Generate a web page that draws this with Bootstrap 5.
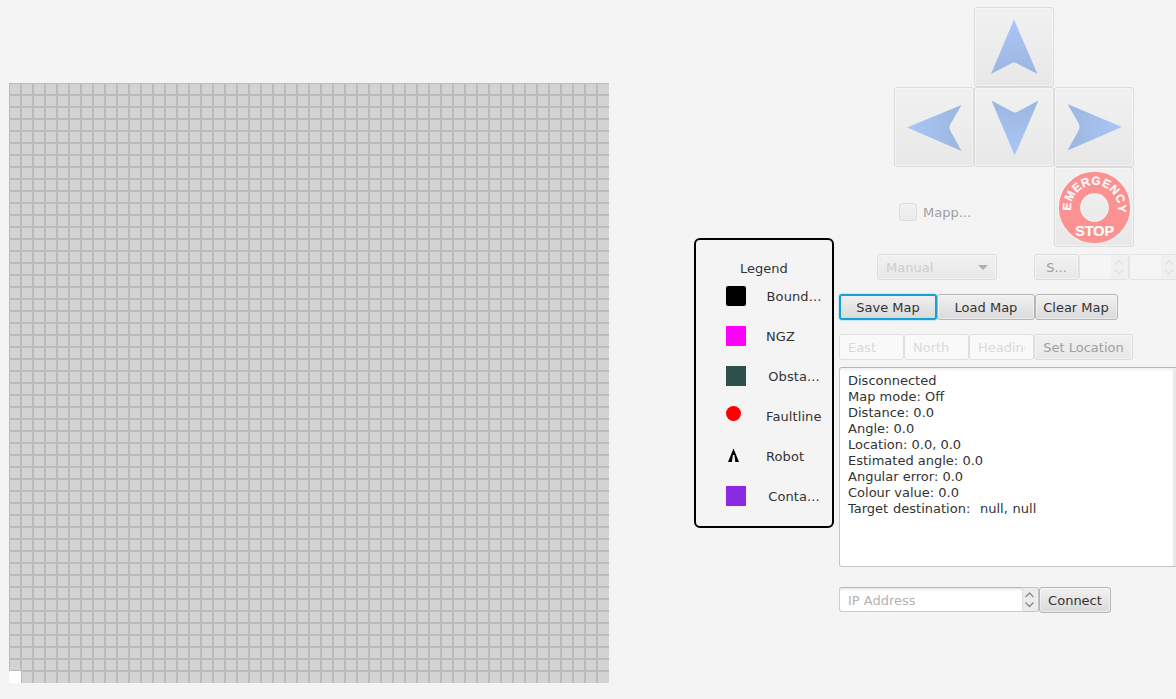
<!DOCTYPE html>
<html lang="en">
<head>
<meta charset="utf-8">
<meta name="viewport" content="width=device-width, initial-scale=1">
<title>Robot Control</title>
<link href="https://cdn.jsdelivr.net/npm/bootstrap@5.3.0/dist/css/bootstrap.min.css" rel="stylesheet">
<style>
body{background:#f4f4f4;font:13px/16px "DejaVu Sans",sans-serif;color:#333;width:1176px;height:699px;overflow:hidden}
.map-grid{width:600px;height:600px;margin:83px 0 0 9px;background:
 repeating-linear-gradient(90deg,#bbb 0 1px,transparent 1px 11px,#bbb 11px 12px),
 repeating-linear-gradient(180deg,#bbb 0 1px,transparent 1px 11px,#bbb 11px 12px) #d3d3d3;
 background-size:599px 600px,600px 599px;background-repeat:no-repeat}
.origin-cell{width:12px;height:12px;background:#fff}
.legend-box{width:140px;height:290px;margin:238px 5px 0 85px;border:2px solid #000;border-radius:6px;padding-top:20px}
.legend-title{padding-top:1px;margin-bottom:-1px}
.legend-item{height:40px;padding-left:30px}
.legend-item svg,.swatch{width:20px;height:20px;flex:none}
.legend-name{width:56px;margin-left:20px;padding-top:2px;white-space:nowrap;letter-spacing:.1px}
.panel{width:350px}
.pad{display:grid;grid-template-columns:repeat(3,80px);grid-template-rows:repeat(3,80px);margin:7px 0 0 55px}
.fx{font:inherit;color:#333;border:1px solid #b5b5b5;border-radius:3px;background:linear-gradient(#f1f1f1,#dadada);box-shadow:inset 0 0 0 1px rgba(255,255,255,.45);padding:2px 0 0;height:26px;line-height:22px;flex:none;white-space:nowrap}
.fx:disabled{font:inherit;line-height:22px;color:#a0a0a0;border-color:#dcdcdc;background:linear-gradient(#f1f1f1,#e8e8e8);opacity:1}
.pad .fx{width:80px;height:80px;padding:0}
.pad svg{display:block;width:78px;height:78px}
.fx.focused{border:2px solid #16a0d3;box-shadow:0 0 1px 1px #c5e5f2;line-height:20px;color:#333;background:linear-gradient(#efefef,#dadada)}
.field{font:inherit;height:26px;border:1px solid #ccc;border-top-color:#b8b8b8;border-radius:3px;background:#fff;padding:0 8px;color:#333;flex:none;box-shadow:inset 0 3px 3px -2px #ddd}
.field::placeholder{color:#b3b3b3;opacity:1}
.field:disabled{background:#f9f9f9;border-color:#e0e0e0;box-shadow:none}
.field:disabled::placeholder{color:#dadada}
.tick{width:18px;height:18px;border:1px solid #dcdcdc;border-radius:3px;background:linear-gradient(#f1f1f1,#ebebeb)}
.mapping{height:18px;margin:-44px 0 0 60px;color:#a0a0a0}
.spin{width:50px;height:26px;border:1px solid #e4e4e4;border-radius:3px;background:#f5f5f5;flex:none}
.spin svg{width:17px;height:24px;background:#f0f0f0;display:block}
.log{width:350px;height:200px;margin-top:7px;border:1px solid #c6c6c6;border-top-color:#b5b5b5;border-radius:3px;padding:5px 8px;background:linear-gradient(#f0f0f0,transparent 4px),linear-gradient(90deg,#fff 333px,#e8e8e8 333px);white-space:pre}
.target-line{word-spacing:.7px}
.ip{width:183px;height:25px;padding-top:2px;border-radius:3px 0 0 3px;border-right:0}
.ip-spin{width:17px;height:25px;border:1px solid #c4c4c4;border-left-color:#ddd;border-radius:0 3px 3px 0;background:#ececec;flex:none}
</style>
</head>
<body>
<main class="d-flex align-items-start">
  <section class="map-grid d-flex align-items-end flex-shrink-0"><div class="origin-cell"></div></section>

  <aside class="legend-box flex-shrink-0">
    <div class="legend-title text-center">Legend</div>
    <div class="legend-item d-flex align-items-center"><span class="swatch" style="background:#000;border-radius:2px"></span><span class="legend-name text-center">Bound...</span></div>
    <div class="legend-item d-flex align-items-center"><span class="swatch" style="background:#f0f"></span><span class="legend-name">NGZ</span></div>
    <div class="legend-item d-flex align-items-center"><span class="swatch" style="background:#2f4f4f"></span><span class="legend-name text-center">Obsta...</span></div>
    <div class="legend-item d-flex align-items-center"><svg viewBox="0 0 20 20"><circle cx="7.5" cy="7.5" r="7.5" fill="red"/></svg><span class="legend-name">Faultline</span></div>
    <div class="legend-item d-flex align-items-center"><svg viewBox="0 0 20 20"><path d="M7.5 2.5 13 16H9.3L8.4 9H6.9L5.9 16H2Z"/></svg><span class="legend-name">Robot</span></div>
    <div class="legend-item d-flex align-items-center"><span class="swatch" style="background:#8a2be2"></span><span class="legend-name text-center">Conta...</span></div>
  </aside>

  <section class="panel flex-shrink-0">
    <svg width="0" height="0" class="d-block"><defs>
      <linearGradient id="up" x2="0" y2="1"><stop stop-color="#abc6f7"/><stop offset="1" stop-color="#9bb7df"/></linearGradient>
      <linearGradient id="down" x2="0" y2="1"><stop stop-color="#9bb7df"/><stop offset="1" stop-color="#abc6f7"/></linearGradient>
      <linearGradient id="left"><stop stop-color="#abc6f7"/><stop offset="1" stop-color="#9bb7df"/></linearGradient>
      <linearGradient id="right"><stop stop-color="#9bb7df"/><stop offset="1" stop-color="#abc6f7"/></linearGradient>
    </defs></svg>
    <div class="pad">
      <span></span>
      <button class="fx" disabled aria-label="Forward"><svg viewBox="1 1 78 78"><path fill="url(#up)" d="M40 12.5 63.5 67 42 56Q40 55 38 56L17 67Z"/></svg></button>
      <span></span>
      <button class="fx" disabled aria-label="Left"><svg viewBox="1 1 78 78"><path fill="url(#left)" d="M13 40.5 67.5 18 56.5 37Q54.5 40.5 56.5 44L67.5 64Z"/></svg></button>
      <button class="fx" disabled aria-label="Backward"><svg viewBox="1 1 78 78"><path fill="url(#down)" d="M40.7 68.5 17.5 13.5 38 24.5Q41 26.5 44 24.5L64.5 13.5Z"/></svg></button>
      <button class="fx" disabled aria-label="Right"><svg viewBox="1 1 78 78"><path fill="url(#right)" d="M68 40 13.5 17 24.5 36Q26.5 40 24.5 43.5L13.5 63.5Z"/></svg></button>
      <span></span><span></span>
      <button class="fx" disabled aria-label="Emergency stop"><svg viewBox="1 1 78 78">
        <circle cx="40.5" cy="40.5" r="25" fill="none" stroke="#fafafa" stroke-width="23"/>
        <circle cx="40.5" cy="40.5" r="25" fill="none" stroke="#fb9292" stroke-width="21.4"/>
        <path id="arc" d="M17.1 43.5A23.5 23.5 0 1 1 63.9 43.5" fill="none"/>
        <g fill="#fafafa" font-family="Liberation Sans,sans-serif" font-weight="700"><text font-size="11.8" stroke="#fafafa" stroke-width=".2"><textPath href="#arc" textLength="79.5">EMERGENCY</textPath></text>
        <text x="21.2" y="69" font-size="15.2" stroke="#fafafa" stroke-width=".2" textLength="39" lengthAdjust="spacingAndGlyphs">STOP</text></g>
      </svg></button>
    </div>

    <div class="mapping d-flex align-items-center"><span class="tick"></span><span style="margin-left:6px;padding-top:2px">Mapp...</span></div>

    <div class="d-flex" style="margin:33px 0 0 38px">
      <button class="fx d-flex align-items-center justify-content-between" disabled style="width:120px;padding:2px 8px 0;color:#cdcdcd;margin-right:37px">Manual<svg width="10" height="5" style="margin-top:-2px"><path d="M0 0H10L5 5Z" fill="#b0b0b0"/></svg></button>
      <button class="fx" disabled style="width:45px">S...</button>
      <div class="spin d-flex justify-content-end"><svg viewBox="0 0 17 24"><path d="M4 9.5 8 5.5 12 9.5M4 14.5 8 18.5 12 14.5" fill="none" stroke="#e2e2e2" stroke-width="1.3"/></svg></div>
      <div class="spin d-flex justify-content-end"><svg viewBox="0 0 17 24"><path d="M4 9.5 8 5.5 12 9.5M4 14.5 8 18.5 12 14.5" fill="none" stroke="#e2e2e2" stroke-width="1.3"/></svg></div>
    </div>

    <div class="d-flex" style="margin-top:14px">
      <button class="fx focused" style="width:98px">Save Map</button>
      <button class="fx" style="width:98px">Load Map</button>
      <button class="fx" style="width:83px;padding-right:1px">Clear Map</button>
    </div>

    <div class="d-flex" style="margin-top:14px">
      <input class="field" style="width:65px" placeholder="East" disabled>
      <input class="field" style="width:65px" placeholder="North" disabled>
      <input class="field" style="width:65px" placeholder="Heading" disabled>
      <button class="fx" disabled style="width:99px">Set Location</button>
    </div>

    <div class="log">Disconnected
Map mode: Off
Distance: 0.0
Angle: 0.0
Location: 0.0, 0.0
Estimated angle: 0.0
Angular error: 0.0
Colour value: 0.0
<span class="target-line">Target destination:  null, null</span></div>

    <div class="d-flex" style="margin-top:20px">
      <input class="field ip" placeholder="IP Address">
      <div class="ip-spin"><svg class="d-block" width="15" height="23"><path d="M2.5 9 6.5 5 10.5 9M2.5 14.5 6.5 18.5 10.5 14.5" fill="none" stroke="#8a8a8a" stroke-width="1.3"/></svg></div>
      <button class="fx" style="width:72px">Connect</button>
    </div>
  </section>
</main>
<script src="https://cdn.jsdelivr.net/npm/bootstrap@5.3.0/dist/js/bootstrap.bundle.min.js"></script>
</body>
</html>
